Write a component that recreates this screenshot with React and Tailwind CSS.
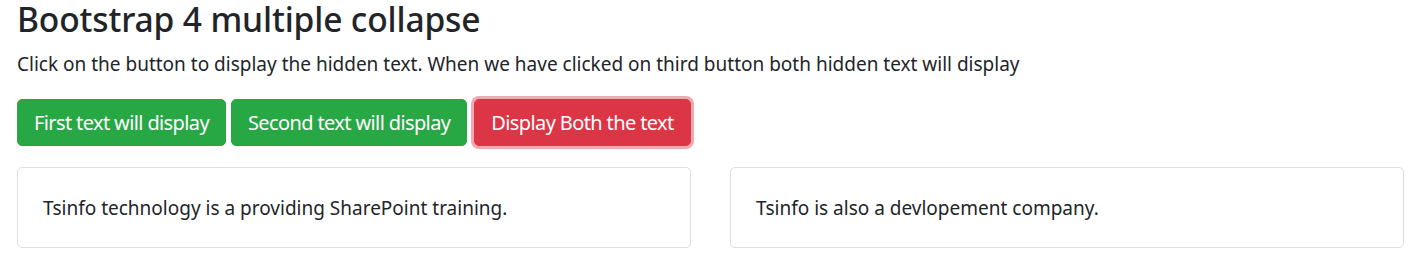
import React from "react";

function Btn({ children, className }) {
  return (
    <button
      className={
        "rounded-[5px] border px-[16px] pt-[8px] pb-[7px] text-[20px] leading-[30px] tracking-[-0.62px] text-white " +
        className
      }
    >
      {children}
    </button>
  );
}

export default function App() {
  return (
    <div className="w-full bg-white px-[17px] pt-[1px] text-[#212529] font-['Noto_Sans','Open_Sans',sans-serif]">
      <h2 className="m-0 text-[33.6px] font-medium leading-[37px] tracking-[-0.15px]">
        Bootstrap 4 multiple collapse
      </h2>
      <p className="mt-[12px] text-[19px] leading-[28px]">
        Click on the button to display the hidden text. When we have clicked on third button both hidden text will display
      </p>
      <div className="mt-[21px] flex items-start gap-[5px]">
        <Btn className="border-[#28a745] bg-[#28a745]">First text will display</Btn>
        <Btn className="border-[#28a745] bg-[#28a745]">Second text will display</Btn>
        <Btn className="ml-[2px] border-[#dc3545] bg-[#dc3545] shadow-[0_0_0_3px_rgba(225,83,97,0.5)]">
          Display Both the text
        </Btn>
      </div>
      <div className="mt-[21px] grid grid-cols-2 gap-[39px]">
        <div className="rounded-[5px] border border-[#dfdfdf] px-[25px] pt-[26px] pb-[25px] text-[19px] leading-[28px]">
          Tsinfo technology is a providing SharePoint training.
        </div>
        <div className="rounded-[5px] border border-[#dfdfdf] px-[25px] pt-[26px] pb-[25px] text-[19px] leading-[28px]">
          Tsinfo is also a devlopement company.
        </div>
      </div>
    </div>
  );
}
